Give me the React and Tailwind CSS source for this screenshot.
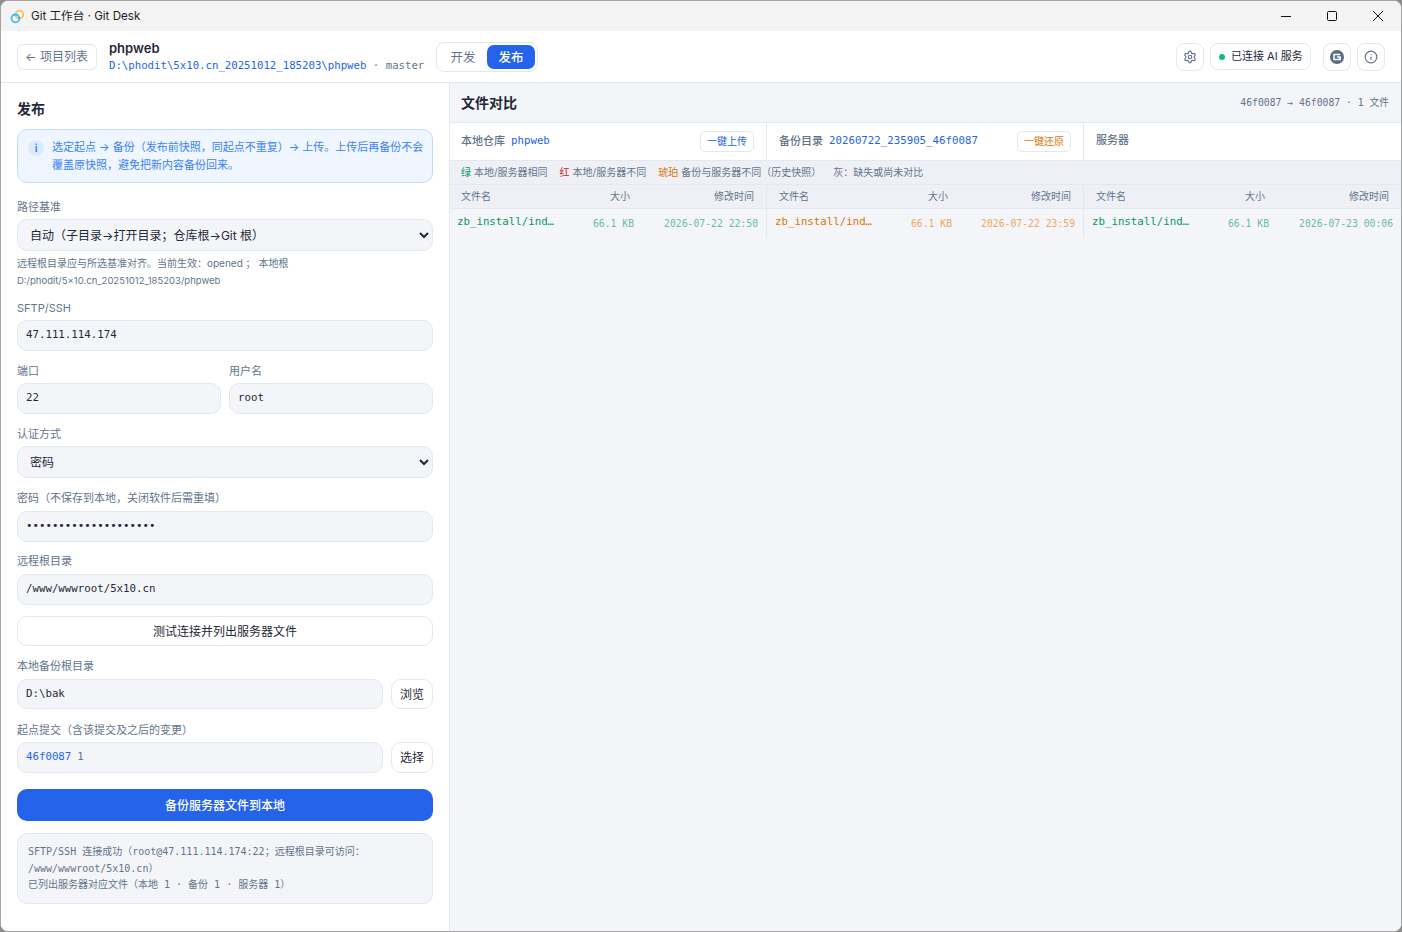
import {Info, Settings} from "lucide-react";

const sans = "font-['Inter','Noto_Sans_CJK_SC',sans-serif]";
const mono = "font-['DejaVu_Sans_Mono','Noto_Sans_CJK_SC',monospace]";

function Label({children, className = ""}) {
    return <div className={"h-[14px] text-[11px] leading-[14px] text-[#64748b] " + className}>{children}</div>;
}

function TextInput({value, type = "text", className = ""}) {
    return (
        <input
            readOnly
            type={type}
            value={value}
            className={mono + " h-[31px] w-full rounded-[10px] border border-[#e2e8f0] bg-[#f4f5f9] px-[8px] pb-[2px] text-[10.75px] text-[#1f2937] outline-none " + className}
        />
    );
}

function SelectBox({value}) {
    return (
        <select
            value={value}
            onChange={() => {}}
            className="h-[32px] w-full rounded-[10px] border border-[#e2e8f0] bg-[#f4f5f9] px-[8px] text-[12px] text-[#1f2937] outline-none"
        >
            <option>{value}</option>
        </select>
    );
}

function LeftPanel() {
    return (
        <aside className="flex w-[449px] shrink-0 flex-col border-r border-[#e2e8f0] bg-white pl-[16px] pr-[16px] pt-[16px]">
            <h2 className="h-[18px] text-[14px] font-bold leading-[20px] text-[#1f2937]">发布</h2>

            {/* Info box */}
            <div className="mt-[12px] flex h-[54px] rounded-[10px] border border-[#bfdbfe] bg-[#eff6ff] pl-[10px] pr-[6px] pt-[8px]">
                <div className="mr-[8px] mt-[2px] flex h-[16px] w-[16px] shrink-0 items-center justify-center rounded-full bg-[#dbeafe] text-[10px] font-bold text-[#3b82f6]">i</div>
                <p className="text-[11px] leading-[18px] text-[#3b82f6]">选定起点 → 备份（发布前快照，同起点不重复）→ 上传。上传后再备份不会覆盖原快照，避免把新内容备份回来。</p>
            </div>

            <Label className="mt-[17px]">路径基准</Label>
            <div className="mt-[5px]"><SelectBox value="自动（子目录→打开目录；仓库根→Git 根）"/></div>
            <p className="mt-[4px] text-[10px] leading-[17px] text-[#64748b]">
                远程根目录应与所选基准对齐。当前生效：opened ； 本地根<br/>
                <span className="text-[9.5px]">D:/phodit/5x10.cn_20251012_185203/phpweb</span>
            </p>

            <Label className="mt-[12px]">SFTP/SSH</Label>
            <div className="mt-[5px]"><TextInput value="47.111.114.174"/></div>

            <div className="mt-[13px] grid grid-cols-2 gap-x-[8px]">
                <div>
                    <Label>端口</Label>
                    <div className="mt-[5px]"><TextInput value="22"/></div>
                </div>
                <div>
                    <Label>用户名</Label>
                    <div className="mt-[5px]"><TextInput value="root"/></div>
                </div>
            </div>

            <Label className="mt-[13px]">认证方式</Label>
            <div className="mt-[5px]"><SelectBox value="密码"/></div>

            <Label className="mt-[13px]">密码（不保存到本地，关闭软件后需重填）</Label>
            <div className="mt-[6px]"><TextInput type="password" value="12345678901234567890"/></div>

            <Label className="mt-[12px]">远程根目录</Label>
            <div className="mt-[6px]"><TextInput value="/www/wwwroot/5x10.cn"/></div>

            <button className="mt-[11px] h-[30px] w-full rounded-[10px] border border-[#e2e8f0] bg-white pt-[1px] text-[12px] text-[#1f2937]">测试连接并列出服务器文件</button>

            <Label className="mt-[13px]">本地备份根目录</Label>
            <div className="mt-[6px] flex gap-[8px]">
                <TextInput className="min-w-0 flex-1 !h-[30px]" value="D:\bak"/>
                <button className="h-[30px] w-[42px] shrink-0 rounded-[10px] border border-[#e2e8f0] bg-white pt-[1px] text-[12px] text-[#1f2937]">浏览</button>
            </div>

            <Label className="mt-[14px]">起点提交（含该提交及之后的变更）</Label>
            <div className="mt-[5px] flex gap-[8px]">
                <div className={mono + " flex h-[31px] min-w-0 flex-1 items-center rounded-[10px] border border-[#e2e8f0] bg-[#f4f5f9] px-[8px] text-[10.75px]"}>
                    <span className="text-[#2563eb]">46f0087</span>
                    <span className="ml-[6px] text-[#64748b]">1</span>
                </div>
                <button className="h-[31px] w-[42px] shrink-0 rounded-[10px] border border-[#e2e8f0] bg-white pt-[1px] text-[12px] text-[#1f2937]">选择</button>
            </div>

            <button className="mt-[16px] h-[32px] w-full rounded-[10px] bg-[#2563eb] pt-[1px] text-[12px] font-medium text-white">备份服务器文件到本地</button>

            <div className={mono + " mt-[12px] h-[71px] rounded-[10px] border border-[#e2e8f0] bg-[#f4f5f9] px-[10px] pt-[10px] text-[10px] leading-[16.5px] text-[#64748b]"}>
                SFTP/SSH 连接成功（root@47.111.114.174:22；远程根目录可访问：<br/>/www/wwwroot/5x10.cn）<br/>已列出服务器对应文件（本地 1 · 备份 1 · 服务器 1）
            </div>
        </aside>
    );
}

function CompareColumn({title, name, action, actionClass, pad, last}) {
    return (
        <div className={"flex h-[37px] items-center justify-between bg-white pr-[12px] " + pad + " " + (last ? "flex-1" : "w-[317px] border-r border-[#e2e8f0]")}>
            <div className={"flex items-center text-[11px] text-[#64748b] " + (last ? "mb-[3px]" : "")}>
                <span className="font-medium">{title}</span>
                {name && <span className={mono + " mb-[1px] ml-[6px] text-[10.75px] text-[#2563eb]"}>{name}</span>}
            </div>
            {action && <button className={"h-[21px] w-[54px] rounded-[5px] border border-[#e2e8f0] bg-white text-[10px] " + actionClass}>{action}</button>}
        </div>
    );
}

function FileTable({color, sizeColor, time, pad, rowPad}) {
    return (
        <div className="flex-1">
            <div className={"flex h-[24px] items-center border-b border-[#e2e8f0] bg-[#eef0f5] pr-[12px] text-[10px] text-[#64748b] " + pad}>
                <span className="w-[149px]">文件名</span>
                <span className="w-[20px] whitespace-nowrap">大小</span>
                <span className="flex-1 text-right">修改时间</span>
            </div>
            <div className={mono + " flex h-[29px] items-center pr-[8px] " + rowPad}>
                <span className={"mb-[2px] w-[110px] whitespace-nowrap text-[10.75px] " + color}>zb_install/ind…</span>
                <span className={"mt-[1px] w-[67px] text-right text-[9.75px] " + sizeColor}>66.1 KB</span>
                <span className={"mt-[1px] flex-1 text-right text-[9.75px] " + sizeColor}>{time}</span>
            </div>
        </div>
    );
}

function RightPanel() {
    return (
        <main className="flex min-w-0 flex-1 flex-col bg-[#f4f5f9]">
            <div className="flex h-[40px] items-center justify-between border-b border-[#e2e8f0] pl-[11px] pr-[12px]">
                <h2 className="text-[14px] font-bold text-[#1f2937]">文件对比</h2>
                <span className={mono + " mt-[1px] text-[9.75px] text-[#64748b]"}>46f0087 → 46f0087 · 1 文件</span>
            </div>
            <div className="flex border-b border-[#e2e8f0]">
                <CompareColumn pad="pl-[11px]" title="本地仓库" name="phpweb" action="一键上传" actionClass="text-[#2563eb]"/>
                <CompareColumn pad="pl-[12px]" title="备份目录" name="20260722_235905_46f0087" action="一键还原" actionClass="text-[#d97706]"/>
                <CompareColumn pad="pl-[12px]" title="服务器" last/>
            </div>
            <div className="flex h-[24px] items-center border-b border-[#e2e8f0] bg-[#eef0f5] pl-[11px] text-[10px] text-[#64748b]">
                <span className="text-[#059669]">绿</span><span className="ml-[3px]">本地/服务器相同</span>
                <span className="ml-[12px] text-[#dc2626]">红</span><span className="ml-[3px]">本地/服务器不同</span>
                <span className="ml-[12px] text-[#d97706]">琥珀</span><span className="ml-[3px]">备份与服务器不同（历史快照）</span>
                <span className="ml-[12px]">灰：缺失或尚未对比</span>
            </div>
            <div className="flex">
                <div className="w-[317px] border-r border-[#e2e8f0]"><FileTable pad="pl-[11px]" rowPad="pl-[7px]" color="text-[#059669]" sizeColor="text-[#6cbba0]" time="2026-07-22 22:50"/></div>
                <div className="w-[317px] border-r border-[#e2e8f0]"><FileTable pad="pl-[12px]" rowPad="pl-[8px]" color="text-[#d97706]" sizeColor="text-[#eba862]" time="2026-07-22 23:59"/></div>
                <div className="flex-1"><FileTable pad="pl-[12px]" rowPad="pl-[8px]" color="text-[#059669]" sizeColor="text-[#6cbba0]" time="2026-07-23 00:06"/></div>
            </div>
        </main>
    );
}

export default function App() {
    return (
        <div className={sans + " h-[932px] w-[1402px] overflow-hidden bg-[#8c8c8c]"}>
            <div className="flex h-full flex-col overflow-hidden rounded-[8px] border border-[#a3a3a3] bg-white">
                {/* Title bar */}
                <div className="flex h-[30px] shrink-0 items-center bg-[#f3f3f3] pl-[9px]">
                    <svg width="15" height="15" viewBox="0 0 15 15" fill="none">
                        <circle cx="9.4" cy="5.6" r="3.9" stroke="#fbbf4d" strokeWidth="1.8"/>
                        <circle cx="5.4" cy="9.4" r="3.9" stroke="#38bdf8" strokeWidth="1.8"/>
                    </svg>
                    <span className="ml-[6px] pt-[1px] text-[11.6px] text-[#1f1f1f]">Git 工作台 · Git Desk</span>
                    <div className="ml-auto flex items-center">
                        <div className="flex h-[30px] w-[46px] items-center justify-center">
                            <svg width="10" height="10" viewBox="0 0 10 10"><path d="M0 5.5h10" stroke="#111" strokeWidth="1"/></svg>
                        </div>
                        <div className="flex h-[30px] w-[46px] items-center justify-center">
                            <svg width="10" height="10" viewBox="0 0 10 10" fill="none"><rect x="0.5" y="0.5" width="9" height="9" rx="1" stroke="#111"/></svg>
                        </div>
                        <div className="flex h-[30px] w-[46px] items-center justify-center">
                            <svg width="10" height="10" viewBox="0 0 10 10"><path d="M0 0l10 10M10 0 0 10" stroke="#111" strokeWidth="1"/></svg>
                        </div>
                    </div>
                </div>

                {/* App header */}
                <header className="flex h-[52px] shrink-0 items-center border-b border-[#e2e8f0] bg-white pl-[16px] pr-[16px]">
                    <button className="h-[26px] w-[80px] rounded-[6px] border border-[#e2e8f0] pt-[1px] pr-[1px] text-[12px] text-[#64748b]">← 项目列表</button>
                    <div className="ml-[12px] flex w-[327px] flex-col">
                        <span className="mt-[-1px] text-[13px] font-semibold leading-[17px] text-[#1f2937]">phpweb</span>
                        <div className={mono + " mt-[1px] whitespace-nowrap text-[10.7px] leading-[15px]"}>
                            <span className="text-[#2563eb]">D:\phodit\5x10.cn_20251012_185203\phpweb</span>
                            <span className="text-[#64748b]"> · master</span>
                        </div>
                    </div>
                    <div className="flex h-[30px] w-[102px] items-center rounded-[8px] border border-[#e2e8f0] p-[2px]">
                        <span className="flex h-[24px] w-[48px] items-center justify-center pt-[3px] text-[12.5px] text-[#64748b]">开发</span>
                        <span className="flex h-[24px] w-[48px] items-center justify-center rounded-[7px] bg-[#2563eb] pt-[3px] text-[12.5px] font-medium text-white">发布</span>
                    </div>
                    <div className="ml-auto flex items-center">
                        <button className="flex h-[28px] w-[28px] items-center justify-center rounded-[8px] border border-[#e2e8f0] text-[#64748b]"><Settings size={14}/></button>
                        <div className="ml-[6px] flex h-[27px] w-[101px] items-center rounded-[8px] border border-[#e2e8f0] pl-[8px] text-[11px] text-[#1f2937]">
                            <span className="mr-[6px] h-[6px] w-[6px] rounded-full bg-[#10b981]"/>已连接 AI 服务
                        </div>
                        <button className="ml-[12px] flex h-[28px] w-[28px] items-center justify-center rounded-[8px] border border-[#e2e8f0]">
                            <svg width="14" height="14" viewBox="0 0 14 14" fill="none">
                                <circle cx="7" cy="7" r="7" fill="#5b6b85"/>
                                <path d="M10.2 4.6H4v4.8h6.2V7H7" stroke="#fff" strokeWidth="1.5"/>
                            </svg>
                        </button>
                        <button className="ml-[6px] flex h-[28px] w-[28px] items-center justify-center rounded-[8px] border border-[#e2e8f0] text-[#64748b]"><Info size={14}/></button>
                    </div>
                </header>

                <div className="flex min-h-0 flex-1">
                    <LeftPanel/>
                    <RightPanel/>
                </div>
            </div>
        </div>
    );
}
